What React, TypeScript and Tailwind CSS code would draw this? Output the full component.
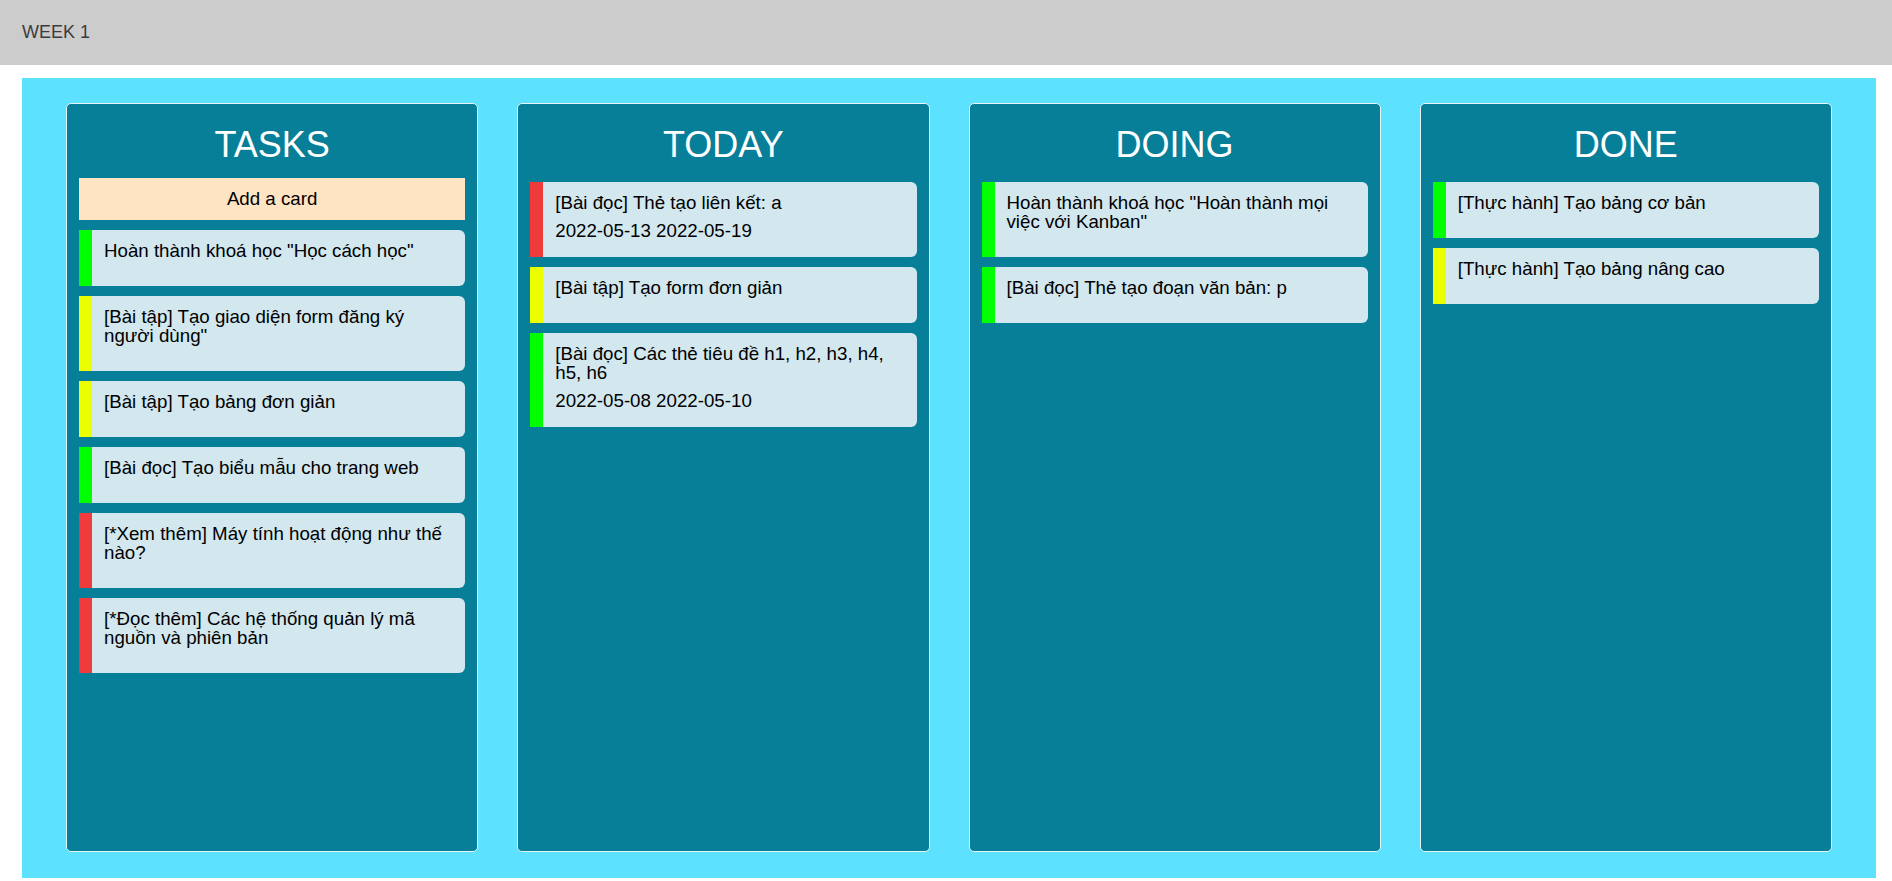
type Card = {
  title: string;
  color: "green" | "yellow" | "red";
  date?: string;
};

type Column = {
  name: string;
  addCard?: boolean;
  cards: Card[];
};

const barColor = {
  green: "bg-[#00ff00]",
  yellow: "bg-[#ebff00]",
  red: "bg-[#ef3b3b]",
};

const columns: Column[] = [
  {
    name: "TASKS",
    addCard: true,
    cards: [
      { title: 'Hoàn thành khoá học "Học cách học"', color: "green" },
      { title: '[Bài tập] Tạo giao diện form đăng ký người dùng"', color: "yellow" },
      { title: "[Bài tập] Tạo bảng đơn giản", color: "yellow" },
      { title: "[Bài đọc] Tạo biểu mẫu cho trang web", color: "green" },
      { title: "[*Xem thêm] Máy tính hoạt động như thế nào?", color: "red" },
      { title: "[*Đọc thêm] Các hệ thống quản lý mã nguồn và phiên bản", color: "red" },
    ],
  },
  {
    name: "TODAY",
    cards: [
      { title: "[Bài đọc] Thẻ tạo liên kết: a", color: "red", date: "2022-05-13 2022-05-19" },
      { title: "[Bài tập] Tạo form đơn giản", color: "yellow" },
      { title: "[Bài đọc] Các thẻ tiêu đề h1, h2, h3, h4, h5, h6", color: "green", date: "2022-05-08 2022-05-10" },
    ],
  },
  {
    name: "DOING",
    cards: [
      { title: 'Hoàn thành khoá học "Hoàn thành mọi việc với Kanban"', color: "green" },
      { title: "[Bài đọc] Thẻ tạo đoạn văn bản: p", color: "green" },
    ],
  },
  {
    name: "DONE",
    cards: [
      { title: "[Thực hành] Tạo bảng cơ bản", color: "green" },
      { title: "[Thực hành] Tạo bảng nâng cao", color: "yellow" },
    ],
  },
];

function TaskCard({ card }: { card: Card }) {
  return (
    <div className="flex overflow-hidden rounded-r-[6px] bg-[#d2e7ee]">
      <div className={`w-[13px] shrink-0 ${barColor[card.color]}`} />
      <div className="flex-1 pl-[12px] pr-[12px] pt-[11px] pb-[16px] text-[18.72px] text-black">
        <div className="leading-[19px]">{card.title}</div>
        {card.date ? (
          <div className="mt-[9px] leading-[20px]">{card.date}</div>
        ) : (
          <div className="h-[10px]" />
        )}
      </div>
    </div>
  );
}

export default function App() {
  return (
    <div className="min-h-[881px] bg-white font-['Liberation_Sans',Arial,sans-serif]">
      {/* Top bar */}
      <div className="flex h-[65px] items-center bg-[#cccccc] px-[22px] text-[18px] text-[#3c3c3c]">
        WEEK 1
      </div>

      {/* Board */}
      <div className="ml-[22px] mt-[13px] grid h-[800px] w-[1854px] grid-cols-4 gap-[39px] bg-[#5ce1fe] px-[44px] pt-[25px] pb-[26px]">
        {columns.map((col) => (
          <div
            key={col.name}
            className="flex flex-col rounded-[5px] border border-[#e6f4f7] bg-[#077f98] px-[12px] pt-[20px]"
          >
            <h1 className="mb-3 text-center text-[36px] leading-[42px] font-normal text-white">
              {col.name}
            </h1>
            {col.addCard && (
              <div className="mb-[10px] flex h-[42px] items-center justify-center bg-[#ffe4c4] text-[18.72px] text-black">
                Add a card
              </div>
            )}
            <div className={`flex flex-col gap-[10px] ${col.addCard ? "" : "pt-1"}`}>
              {col.cards.map((c) => (
                <TaskCard key={c.title} card={c} />
              ))}
            </div>
          </div>
        ))}
      </div>
    </div>
  );
}
